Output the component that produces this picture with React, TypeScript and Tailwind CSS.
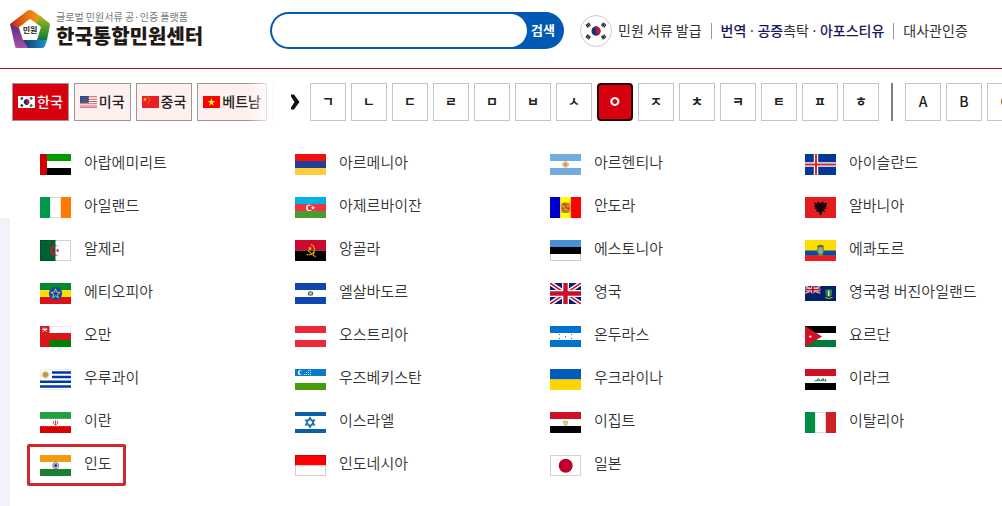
import { ReactNode, useState } from "react";

interface ICountry {
  name: string;
  flag: ReactNode;
  marked?: boolean;
}

const initials = ["ㄱ", "ㄴ", "ㄷ", "ㄹ", "ㅁ", "ㅂ", "ㅅ", "ㅇ", "ㅈ", "ㅊ", "ㅋ", "ㅌ", "ㅍ", "ㅎ"];
const letters = ["A", "B", "C"];

// three bands, equal height or equal width
function Rows({ c }: { c: [string, string, string] }) {
  return (
    <>
      <rect width="31" height="7" fill={c[0]} />
      <rect y="7" width="31" height="7" fill={c[1]} />
      <rect y="14" width="31" height="7" fill={c[2]} />
    </>
  );
}

function Cols({ c }: { c: [string, string, string] }) {
  return (
    <>
      <rect width="10.4" height="21" fill={c[0]} />
      <rect x="10.4" width="10.4" height="21" fill={c[1]} />
      <rect x="20.8" width="10.2" height="21" fill={c[2]} />
    </>
  );
}

function Halves({ top, bottom }: { top: string; bottom: string }) {
  return (
    <>
      <rect width="31" height="10.5" fill={top} />
      <rect y="10.5" width="31" height="10.5" fill={bottom} />
    </>
  );
}

function Edge() {
  return <rect x="0.5" y="0.5" width="30" height="20" fill="none" stroke="#000" strokeOpacity="0.18" />;
}

function Jack() {
  return (
    <>
      <rect width="31" height="21" fill="#012169" />
      <path d="M0 0L31 21M31 0L0 21" stroke="#fff" strokeWidth="4.4" />
      <path d="M0 0L31 21M31 0L0 21" stroke="#c8102e" strokeWidth="1.5" />
      <path d="M15.5 0V21M0 10.5H31" stroke="#fff" strokeWidth="7" />
      <path d="M15.5 0V21M0 10.5H31" stroke="#c8102e" strokeWidth="4.4" />
    </>
  );
}

function Taegeuk() {
  return (
    <>
      <g transform="rotate(30 15.5 10.5)">
        <circle cx="15.5" cy="10.5" r="5" fill="#0f2f7a" />
        <path d="M10.5 10.5a5 5 0 0 1 10 0a2.5 2.5 0 0 1-5 0a2.5 2.5 0 0 0-5 0z" fill="#d0142c" />
      </g>
      <g stroke="#222" strokeWidth="4" strokeDasharray="1.3 0.3">
        <path d="M5 5.600L8.900 3" />
        <path d="M22.100 18L26 15.400" />
        <path d="M22.100 3L26 5.600" />
        <path d="M5 15.400L8.900 18" />
      </g>
    </>
  );
}

function Flag({ children, className }: { children: ReactNode; className: string }) {
  return (
    <svg viewBox="0 0 31 21" preserveAspectRatio="none" className={className} aria-hidden="true">
      {children}
    </svg>
  );
}

const star = "M0-5L1.2-1.6L4.8-1.5L1.9.6L2.9 4L0 2L-2.9 4L-1.9.6L-4.8-1.5L-1.2-1.6Z";

const countries: ICountry[] = [
  { name: "아랍에미리트", flag: <><Rows c={["#009a00", "#fff", "#000"]} /><rect width="7" height="21" fill="#d00000" /></> },
  { name: "아르메니아", flag: <Rows c={["#f60c0c", "#1f3f9b", "#ffcb3f"]} /> },
  {
    name: "아르헨티나",
    flag: (
      <>
        <Rows c={["#74acdf", "#fff", "#74acdf"]} />
        <circle cx="15.5" cy="10.5" r="2.2" fill="#dc9b3e" />
        <circle cx="15.5" cy="10.5" r="3" fill="none" stroke="#dc9b3e" strokeDasharray="1.2 0.7" />
      </>
    ),
  },
  {
    name: "아이슬란드",
    flag: (
      <>
        <rect width="31" height="21" fill="#003897" />
        <path d="M11 0V21M0 10.5H31" stroke="#fff" strokeWidth="4.4" />
        <path d="M11 0V21M0 10.5H31" stroke="#d72828" strokeWidth="2" />
      </>
    ),
  },
  { name: "아일랜드", flag: <><Cols c={["#009a49", "#fff", "#ff7900"]} /><path d="M10.4 0.5H20.8M10.4 20.5H20.8" stroke="#ddd" /></> },
  {
    name: "아제르바이잔",
    flag: (
      <>
        <Rows c={["#00b5e2", "#ef3340", "#4a9c2d"]} />
        <circle cx="14.2" cy="10.8" r="3.2" fill="#fff" />
        <circle cx="15.2" cy="10.8" r="2.5" fill="#ef3340" />
        <path d={star} transform="translate(18 10.8) scale(.45)" fill="#fff" />
      </>
    ),
  },
  {
    name: "안도라",
    flag: (
      <>
        <Cols c={["#0000cd", "#ffff00", "#ff0000"]} />
        <rect x="11.2" y="5.5" width="9" height="10.5" rx="3" fill="#c9762b" />
        <path d="M12 9l3 1 4-2M12 13l4-1 3 2" stroke="#e8b11c" fill="none" />
        <path d="M13 6.5l2 1M17 11l2 1M13 11v2M16 8v3" stroke="#a32a1a" />
      </>
    ),
  },
  {
    name: "알바니아",
    flag: (
      <>
        <rect width="31" height="21" fill="#e41e20" />
        <path d="M15.5 6.5L13.5 4.5L12 5.5L13 7L10 5.5L9 6L10 8.5L9 9.5L10.5 10.5L9.5 12L12 12L10.8 15L13.4 14L14 16L15.5 18.5L17 16L17.6 14L20.2 15L19 12L21.5 12L20.5 10.5L22 9.5L21 8.5L22 6L21 5.5L18 7L19 5.5L17.5 4.5Z" fill="#180606" />
      </>
    ),
  },
  {
    name: "알제리",
    flag: (
      <>
        <rect width="31" height="21" fill="#fff" />
        <rect width="15.5" height="21" fill="#006233" />
        <path d="M19 6.8A5.2 5.2 0 1 0 19 14.2A4.3 4.3 0 1 1 19 6.8Z" fill="#d21034" />
        <path d={star} transform="translate(17.6 10.5) rotate(-90) scale(.42)" fill="#d21034" />
        <Edge />
      </>
    ),
  },
  {
    name: "앙골라",
    flag: (
      <>
        <Halves top="#cc092f" bottom="#000" />
        <path d="M16 4.5C20 6 20.5 11 17.5 13.5M11.5 14.5C14 15 16 15 20 12.5M13 10.5L20.5 17" stroke="#ffcb00" strokeWidth="1.1" fill="none" strokeDasharray="1.8 0.4" />
        <path d={star} transform="translate(15 8.5) scale(.45)" fill="#ffcb00" />
      </>
    ),
  },
  { name: "에스토니아", flag: <><Rows c={["#4891d9", "#000", "#fff"]} /><path d="M.5 14V20.5H30.5V14" fill="none" stroke="#ccc" /></> },
  {
    name: "에콰도르",
    flag: (
      <>
        <rect width="31" height="21" fill="#ffdd00" />
        <rect y="10.5" width="31" height="5.3" fill="#034ea2" />
        <rect y="15.5" width="31" height="5.5" fill="#ed1c24" />
        <path d="M12 6L15.5 4.8L19 6L18 8H13Z" fill="#5b5236" />
        <ellipse cx="15.5" cy="10.5" rx="3" ry="4" fill="#7fb5a0" stroke="#7d6a35" />
        <path d="M13 15H18" stroke="#b08a30" />
      </>
    ),
  },
  {
    name: "에티오피아",
    flag: (
      <>
        <Rows c={["#078930", "#fcdd09", "#da121a"]} />
        <circle cx="15.5" cy="10.5" r="6.6" fill="#0f47af" />
        <path d={star} transform="translate(15.5 10.8)" fill="none" stroke="#d8ce4a" strokeWidth="0.9" />
      </>
    ),
  },
  {
    name: "엘살바도르",
    flag: (
      <>
        <Rows c={["#0f47af", "#fff", "#0f47af"]} />
        <ellipse cx="15.5" cy="10.5" rx="2.2" ry="1.7" fill="#bfc389" stroke="#566a4b" strokeWidth="1.1" />
      </>
    ),
  },
  { name: "영국", flag: <Jack /> },
  {
    name: "영국령 버진아일랜드",
    flag: (
      <>
        <rect y="3" width="31" height="15" fill="#012169" />
        <svg y="3" width="15.5" height="7.5" viewBox="0 0 31 21" preserveAspectRatio="none"><Jack /></svg>
        <path d="M20.5 6.5H27V11C27 13 25 14 23.7 14.5C22 14 20.5 13 20.5 11Z" fill="#2f7d4a" />
        <path d="M23.7 7.5V13" stroke="#e9e2c6" strokeWidth="1.5" />
        <path d="M20 14.5Q23.7 16.5 27.5 14.5" stroke="#c9b54a" fill="none" />
      </>
    ),
  },
  {
    name: "오만",
    flag: (
      <>
        <Rows c={["#fff", "#db161b", "#008000"]} />
        <rect width="9.5" height="21" fill="#db161b" />
        <path d="M2.5 2L7 6M7 2L2.5 6M2 3.5H7.5M4.7 1.5V4" stroke="#fff" strokeWidth="0.8" />
        <path d="M9.500 .5H30.500V7" stroke="#ddd" strokeWidth="0.600" fill="none" />
      </>
    ),
  },
  { name: "오스트리아", flag: <Rows c={["#ed2939", "#fff", "#ed2939"]} /> },
  {
    name: "온두라스",
    flag: (
      <>
        <Rows c={["#0073cf", "#fff", "#0073cf"]} />
        <path d="M9 8h1v1h-1zM9 12h1v1h-1zM15 10h1v1h-1zM21 8h1v1h-1zM21 12h1v1h-1z" fill="#0073cf" />
      </>
    ),
  },
  {
    name: "요르단",
    flag: (
      <>
        <Rows c={["#000", "#fff", "#007a3d"]} />
        <path d="M0 0L17 10.5L0 21Z" fill="#ce1126" />
        <path d={star} transform="translate(5.3 10.5) scale(.36)" fill="#fff" />
      </>
    ),
  },
  {
    name: "우루과이",
    flag: (
      <>
        <rect width="31" height="21" fill="#fff" />
        <path d="M12 3.4H31M12 8H31M0 12.8H31M0 17.5H31" stroke="#0038a8" strokeWidth="2.5" />
        <circle cx="5.5" cy="5.8" r="2.7" fill="#b79b3c" />
        <circle cx="5.5" cy="5.8" r="3.4" fill="none" stroke="#c7a93c" strokeDasharray="1.2 0.7" />
        <path d="M.5 11V.5H30.5M.5 20.5H30.5" fill="none" stroke="#ddd" strokeWidth="0.6" />
      </>
    ),
  },
  {
    name: "우즈베키스탄",
    flag: (
      <>
        <Rows c={["#0b7bd0", "#fff", "#4b9a0c"]} />
        <circle cx="5.5" cy="3.5" r="2.6" fill="#fff" />
        <circle cx="6.6" cy="3.5" r="2.2" fill="#0b7bd0" />
        <path d="M9 5.5H16M11 3.5H16M13 1.5H16" stroke="#cfe4f6" strokeDasharray="1 1" />
      </>
    ),
  },
  { name: "우크라이나", flag: <Halves top="#005bbb" bottom="#ffd500" /> },
  {
    name: "이라크",
    flag: (
      <>
        <Rows c={["#ce1126", "#fff", "#000"]} />
        <path d="M9.5 11.7H21.5M11.5 11L14 9.5V11.5M16 11L18.5 9.5V11.5M20.5 9.5V11.5" stroke="#2b8050" fill="none" />
      </>
    ),
  },
  {
    name: "이란",
    flag: (
      <>
        <Rows c={["#239f40", "#fff", "#da0000"]} />
        <path d="M0 6.7H31M0 14.2H31" stroke="#fff" strokeWidth="0.4" strokeDasharray="1 1" />
        <path d="M13.7 9Q12.5 12 15.5 12.8Q18.5 12 17.3 9M15.5 8.3V13" stroke="#d02a2a" fill="none" strokeWidth="0.9" />
      </>
    ),
  },
  {
    name: "이스라엘",
    flag: (
      <>
        <rect width="31" height="21" fill="#fff" />
        <path d="M0 2H31M0 19H31" stroke="#0b5eaa" strokeWidth="4" />
        <path d="M15 5.5L19.4 13H10.6ZM15 15.5L10.6 8H19.4Z" fill="none" stroke="#0b5eaa" strokeWidth="1.2" />
      </>
    ),
  },
  {
    name: "이집트",
    flag: (
      <>
        <Rows c={["#ce1126", "#fff", "#000"]} />
        <path d="M13.3 9L14.5 13.5H16.8L18 9L16.5 10L15.6 8.5L14.8 10Z" fill="#e9d29a" stroke="#c7a24a" strokeWidth="0.7" />
      </>
    ),
  },
  { name: "이탈리아", flag: <><Cols c={["#008c45", "#fff", "#cd212a"]} /><path d="M10.4 20.5H20.8M10.4 .5H20.8" stroke="#ddd" /></> },
  {
    name: "인도",
    marked: true,
    flag: (
      <>
        <Rows c={["#f59b0f", "#fff", "#1d8030"]} />
        <circle cx="15.7" cy="10.6" r="3" fill="#c8c8e6" stroke="#5a5a9c" strokeWidth="0.8" />
        <circle cx="15.7" cy="10.6" r="1.4" fill="#1c1c6e" />
      </>
    ),
  },
  { name: "인도네시아", flag: <><Halves top="#ff0000" bottom="#fff" /><Edge /></> },
  { name: "일본", flag: <><rect width="31" height="21" fill="#fff" /><circle cx="15.7" cy="10.8" r="7" fill="#bc002d" /><Edge /></> },
];

const quickCountries: ICountry[] = [
  { name: "한국", flag: <><rect width="31" height="21" fill="#fff" /><Taegeuk /></> },
  {
    name: "미국",
    flag: (
      <>
        <rect width="31" height="21" fill="#fff" />
        <path d="M0 1.5H31M0 5.5H31M0 9.5H31M0 13.5H31M0 17.5H31M0 20.5H31" stroke="#d0505c" strokeWidth="1.8" />
        <rect width="16" height="12" fill="#33477c" />
        <path d="M2 3H15M3 6H15M2 9H15" stroke="#8fa0c8" strokeDasharray="1.5 1.5" />
      </>
    ),
  },
  {
    name: "중국",
    flag: (
      <>
        <rect width="31" height="21" fill="#ee1c25" />
        <path d={star} transform="translate(5.5 6) scale(.8)" fill="#ffde00" />
        <path d="M10 2.5h2M12.500 5h2M12.500 8h2M10 11h2" stroke="#ffb000" strokeWidth="1.5" />
      </>
    ),
  },
  { name: "베트남", flag: <><rect width="31" height="21" fill="#f00" /><path d={star} transform="translate(15.5 11) scale(1.4)" fill="#ff0" /></> },
];

function Logo() {
  return (
    <svg viewBox="0 0 40 38" className="h-[38px] w-10 shrink-0" role="img" aria-label="민원">
      <defs>
        <linearGradient id="warm"><stop offset="0" stopColor="#c61d1d" /><stop offset=".5" stopColor="#e8740f" /><stop offset="1" stopColor="#f3a51c" /></linearGradient>
        <linearGradient id="green" x1="0" y1="0" x2="0" y2="1"><stop offset="0" stopColor="#a8b91b" /><stop offset="1" stopColor="#0b7d3b" /></linearGradient>
        <linearGradient id="blue"><stop offset="0" stopColor="#15356f" /><stop offset="1" stopColor="#1b93cf" /></linearGradient>
        <linearGradient id="purple" x1="0" y1="0" x2="0" y2="1"><stop offset="0" stopColor="#5b2a7b" /><stop offset="1" stopColor="#a653ac" /></linearGradient>
      </defs>
      <path d="M0 14L17 1Q20-1 23 1L33 8L29 15L20 9L8 18L10 22Z" fill="url(#warm)" />
      <path d="M30 6L38 12Q40 13 40 15L37 30L27 30L31 17L26 13Z" fill="url(#green)" />
      <path d="M12 30H37L35 36Q34 38 32 38H17Z" fill="url(#blue)" />
      <path d="M0 14L9 18L13 30L18 38H7Q5 38 5 36Z" fill="url(#purple)" />
      <text x="20" y="23" textAnchor="middle" className="fill-[#222] text-[8px] font-bold">민원</text>
    </svg>
  );
}

function Dot() {
  return <span className="font-['Noto_Sans']"> · </span>;
}

export default function App() {
  const [initial, setInitial] = useState<string>("ㅇ");
  const [quick, setQuick] = useState<string>("한국");

  return (
    <div className="flex min-h-screen flex-col overflow-hidden bg-white font-['Noto_Sans_CJK_KR',sans-serif] text-[#333]">
      <header className="flex h-[69px] shrink-0 items-start border-b border-[#a8161f] pl-[10px] whitespace-nowrap">
        <a href="#" className="mt-[10px] flex w-[260px] shrink-0 gap-[6px]">
          <Logo />
          <span className="flex flex-col">
            <span className="text-[10px] leading-[14px] text-[#777]">글로벌 민원서류 공·인증 플랫폼</span>
            <span className="text-[20px] leading-6 font-black text-[#221815]">한국통합민원센터</span>
          </span>
        </a>
        <form className="mt-3 flex h-[37px] w-[294px] shrink-0 rounded-full bg-[#0059b3] p-[2px]" onSubmit={(e) => e.preventDefault()}>
          <input type="text" aria-label="검색" className="w-[255px] rounded-full bg-white px-4 text-[14px] outline-none" />
          <button type="submit" className="px-1 pb-[2px] text-[13px] font-bold text-white">검색</button>
        </form>
        <nav className="mt-[15px] ml-4 flex h-8 items-center text-[14px]">
          <span className="flex size-8 items-center justify-center rounded-full border border-[#ccc]">
            <Flag className="h-5 w-7"><Taegeuk /></Flag>
          </span>
          <a href="#" className="ml-[6px] pb-[2px]">민원 서류 발급</a>
          <span className="mx-[9px] h-4 w-px bg-[#999]" />
          <a href="#" className="pb-[2px]">
            <b className="font-medium text-[#17175c]">번역</b><Dot /><b className="font-medium text-[#17175c]">공증</b>촉탁<Dot /><b className="font-medium text-[#17175c]">아포스티유</b>
          </a>
          <span className="mx-[9px] h-4 w-px bg-[#999]" />
          <a href="#" className="pb-[2px]">대사관인증</a>
        </nav>
      </header>

      <div className="flex grow">
        <div className="mt-[149px] w-[10px] shrink-0 bg-[#f1f3f8]" />
        <main className="min-w-0 grow">
          <div className="flex pt-[14px] pl-[2px]">
            <div className="relative flex w-[262px] shrink-0 gap-[5px] border-r border-[#f4f4f4]">
              {quickCountries.map((data) => (
                <button
                  key={data.name}
                  onClick={() => setQuick(data.name)}
                  className={`flex h-[38px] shrink-0 items-center gap-[2px] border border-[#999] px-[5px] text-[14px] font-medium ${quick === data.name ? "bg-[#d7000f] text-white" : "bg-[#fff0f0] text-[#222]"}`}
                >
                  <Flag className="h-3 w-[17px]">{data.flag}</Flag>
                  <span className="pb-[2px]">{data.name}</span>
                </button>
              ))}
              <div className="pointer-events-none absolute inset-y-0 right-0 w-6 bg-linear-to-r from-transparent to-white" />
            </div>
            <button aria-label="다음" className="flex w-9 shrink-0 items-center justify-center pl-[6px]">
              <svg viewBox="0 0 10 16" className="h-4 w-[10px]">
                <path d="M1 0.500L4 0.500L9.500 8L4 15.500L1 15.500L1 13.500L4.500 8L1 2.500Z" fill="#111" />
              </svg>
            </button>
            <div className="flex min-w-0 grow gap-[5px] overflow-hidden">
              {initials.map((data) => (
                <button
                  key={data}
                  onClick={() => setInitial(data)}
                  className={`h-[38px] w-9 shrink-0 pb-[2px] font-bold ${initial === data ? "rounded-[4px] border-2 border-[#2a0508] bg-[#d7000f] text-[15px] text-white" : "border border-[#c4c4c4] text-[13px] text-[#222]"}`}
                >
                  {data}
                </button>
              ))}
              <span className="mx-[7px] h-[38px] w-[2px] shrink-0 bg-[#808080]" />
              {letters.map((data) => (
                <button key={data} onClick={() => setInitial(data)} className="h-[38px] w-9 shrink-0 border border-[#c4c4c4] pb-[2px] text-[14px] font-medium text-[#222]">
                  {data}
                </button>
              ))}
            </div>
          </div>

          <ul className="mt-[22px] -mr-[58px] grid grid-cols-4 pl-[30px]">
            {countries.map((data) => (
              <li key={data.name} className="relative h-[43px]">
                <a href="#" className="flex h-full items-center gap-[13px] text-[15px] font-[350] whitespace-nowrap">
                  <Flag className="h-[21px] w-[31px] shrink-0">{data.flag}</Flag>
                  <span className="pb-1">{data.name}</span>
                </a>
                {data.marked && <span className="pointer-events-none absolute top-0 -left-[13px] h-[42px] w-[99px] rounded-[2px] border-3 border-[#d0282a]" />}
              </li>
            ))}
          </ul>
        </main>
      </div>
    </div>
  );
}
